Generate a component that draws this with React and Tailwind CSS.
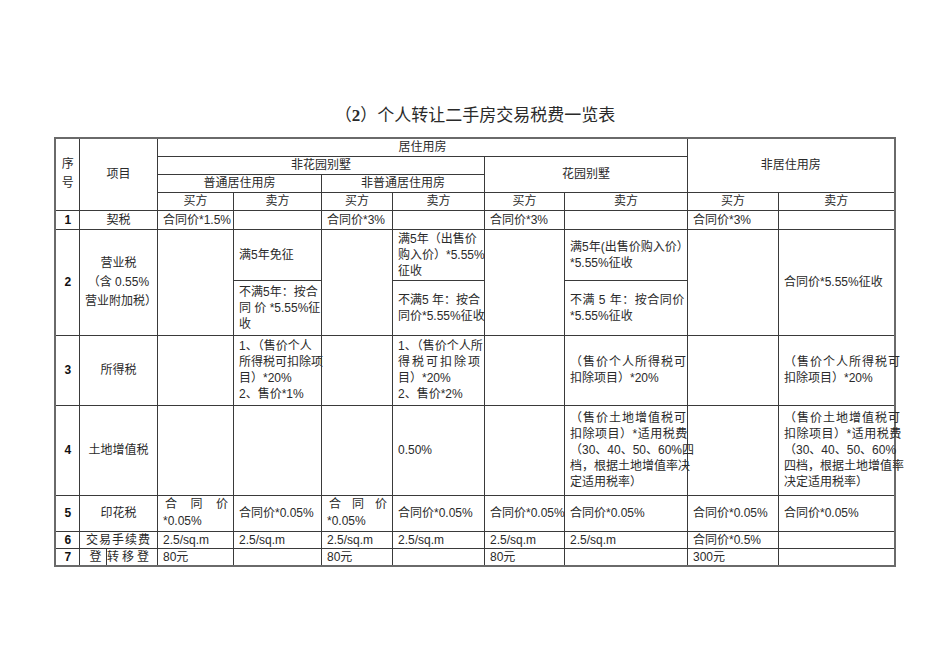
import React from "react";

// 个人转让二手房交易税费一览表 — static table

const C = "border border-[#3a3a3a] px-[5px] py-0 align-middle whitespace-nowrap";

function Cell({ children, className = "", ...rest }) {
  return (
    <td className={`${C} ${className}`} {...rest}>
      {children}
    </td>
  );
}

function No({ n, ...rest }) {
  return (
    <Cell className="text-center font-bold text-[12px] px-0 text-[#111]" {...rest}>
      {n}
    </Cell>
  );
}

function Spread({ chars }) {
  return (
    <div className="flex justify-between pl-[2px]">
      {chars.map((c, i) => (
        <span key={i}>{c}</span>
      ))}
    </div>
  );
}

export default function App() {
  return (
    <div className="min-h-[672px] w-full bg-white pt-[104px] text-[#2a2a2a]" style={{ fontFamily: '"Liberation Sans", "Noto Sans CJK SC", sans-serif' }}>
      <h1 className="text-center text-[17px] leading-[24px] font-normal" style={{ fontFamily: '"Liberation Serif", "Noto Sans CJK SC", serif' }}>
        （<span className="font-bold">2</span>）个人转让二手房交易税费一览表
      </h1>

      <table className="mx-auto mt-[9px] w-[839px] table-fixed border-collapse border-2 border-[#6a6a6a] text-[12px] leading-[16px]">
        <colgroup>
          <col className="w-[24px]" />
          <col className="w-[78px]" />
          <col className="w-[76px]" />
          <col className="w-[88px]" />
          <col className="w-[71px]" />
          <col className="w-[92px]" />
          <col className="w-[80px]" />
          <col className="w-[123px]" />
          <col className="w-[91px]" />
          <col className="w-[116px]" />
        </colgroup>
        <tbody>
          {/* header */}
          <tr className="h-[18px]">
            <Cell rowSpan={4} className="text-center leading-[19px] px-0">序<br />号</Cell>
            <Cell rowSpan={4} className="text-center">项目</Cell>
            <Cell colSpan={6} className="text-center">居住用房</Cell>
            <Cell colSpan={2} rowSpan={3} className="text-center">非居住用房</Cell>
          </tr>
          <tr className="h-[18px]">
            <Cell colSpan={4} className="text-center">非花园别墅</Cell>
            <Cell colSpan={2} rowSpan={2} className="text-center">花园别墅</Cell>
          </tr>
          <tr className="h-[18px]">
            <Cell colSpan={2} className="text-center">普通居住用房</Cell>
            <Cell colSpan={2} className="text-center">非普通居住用房</Cell>
          </tr>
          <tr className="h-[18px]">
            <Cell className="text-center">买方</Cell>
            <Cell className="text-center">卖方</Cell>
            <Cell className="text-center">买方</Cell>
            <Cell className="text-center">卖方</Cell>
            <Cell className="text-center">买方</Cell>
            <Cell className="text-center">卖方</Cell>
            <Cell className="text-center">买方</Cell>
            <Cell className="text-center">卖方</Cell>
          </tr>

          {/* 1 契税 */}
          <tr className="h-[19px]">
            <No n="1" />
            <Cell className="text-center">契税</Cell>
            <Cell>合同价*1.5%</Cell>
            <Cell />
            <Cell>合同价*3%</Cell>
            <Cell />
            <Cell>合同价*3%</Cell>
            <Cell />
            <Cell>合同价*3%</Cell>
            <Cell />
          </tr>

          {/* 2 营业税 */}
          <tr className="h-[51px]">
            <No n="2" rowSpan={2} />
            <Cell rowSpan={2} className="text-center leading-[19px]">
              营业税<br />（含 0.55%<br />营业附加税）
            </Cell>
            <Cell rowSpan={2} />
            <Cell>满5年免征</Cell>
            <Cell rowSpan={2} />
            <Cell>
              满5年（出售价<br />购入价）*5.55%<br />征收
            </Cell>
            <Cell rowSpan={2} />
            <Cell>
              满5年(出售价购入价）<br />*5.55%征收
            </Cell>
            <Cell rowSpan={2} />
            <Cell rowSpan={2}>合同价*5.55%征收</Cell>
          </tr>
          <tr className="h-[55px]">
            <Cell>
              不满5年：按合<br />同 价 *5.55%征<br />收
            </Cell>
            <Cell>
              不满5 年：按合<br />同价*5.55%征收
            </Cell>
            <Cell>
              <span className="tracking-[0.5px]">不满 5 年：按合同价</span>
              <br />*5.55%征收
            </Cell>
          </tr>

          {/* 3 所得税 */}
          <tr className="h-[70px]">
            <No n="3" />
            <Cell className="text-center">所得税</Cell>
            <Cell />
            <Cell>
              1、（售价个人<br />所得税可扣除项<br />目）*20%<br />2、售价*1%
            </Cell>
            <Cell />
            <Cell>
              1、（售价个人所<br />
              <span className="tracking-[2px]">得税可扣除项</span>
              <br />目）*20%<br />2、售价*2%
            </Cell>
            <Cell />
            <Cell>
              <span className="tracking-[1px]">（售价个人所得税可</span>
              <br />扣除项目）*20%
            </Cell>
            <Cell />
            <Cell>
              <span className="tracking-[1px]">（售价个人所得税可</span>
              <br />扣除项目）*20%
            </Cell>
          </tr>

          {/* 4 土地增值税 */}
          <tr className="h-[90px]">
            <No n="4" />
            <Cell className="text-center">土地增值税</Cell>
            <Cell />
            <Cell />
            <Cell />
            <Cell>0.50%</Cell>
            <Cell />
            <Cell>
              <span className="tracking-[1px]">（售价土地增值税可</span>
              <br />
              <span className="tracking-[0.5px]">扣除项目）*适用税费</span>
              <br />（30、40、50、60%四<br />档，根据土地增值率决<br />定适用税率）
            </Cell>
            <Cell />
            <Cell>
              <span className="tracking-[1px]">（售价土地增值税可</span>
              <br />
              <span className="tracking-[0.5px]">扣除项目）*适用税费</span>
              <br />（30、40、50、60%<br />四档，根据土地增值率<br />决定适用税率）
            </Cell>
          </tr>

          {/* 5 印花税 */}
          <tr className="h-[36px]">
            <No n="5" />
            <Cell className="text-center">印花税</Cell>
            <Cell className="leading-[17px]">
              <Spread chars={["合", "同", "价"]} />
              *0.05%
            </Cell>
            <Cell>合同价*0.05%</Cell>
            <Cell className="leading-[17px]">
              <Spread chars={["合", "同", "价"]} />
              *0.05%
            </Cell>
            <Cell>合同价*0.05%</Cell>
            <Cell>合同价*0.05%</Cell>
            <Cell>合同价*0.05%</Cell>
            <Cell>合同价*0.05%</Cell>
            <Cell>合同价*0.05%</Cell>
          </tr>

          {/* 6 交易手续费 */}
          <tr className="h-[17px]">
            <No n="6" />
            <Cell className="text-center tracking-[1px]">交易手续费</Cell>
            <Cell>2.5/sq.m</Cell>
            <Cell>2.5/sq.m</Cell>
            <Cell>2.5/sq.m</Cell>
            <Cell>2.5/sq.m</Cell>
            <Cell>2.5/sq.m</Cell>
            <Cell>2.5/sq.m</Cell>
            <Cell>合同价*0.5%</Cell>
            <Cell />
          </tr>

          {/* 7 登记 */}
          <tr className="h-[17px]">
            <No n="7" />
            <Cell className="px-0">
              <div className="flex">
                <span className="w-[28px] border-r border-[#3a3a3a] text-center">登</span>
                <span className="flex-1 text-center tracking-[3px]">转移登</span>
              </div>
            </Cell>
            <Cell>80元</Cell>
            <Cell />
            <Cell>80元</Cell>
            <Cell />
            <Cell>80元</Cell>
            <Cell />
            <Cell>300元</Cell>
            <Cell />
          </tr>
        </tbody>
      </table>
    </div>
  );
}
